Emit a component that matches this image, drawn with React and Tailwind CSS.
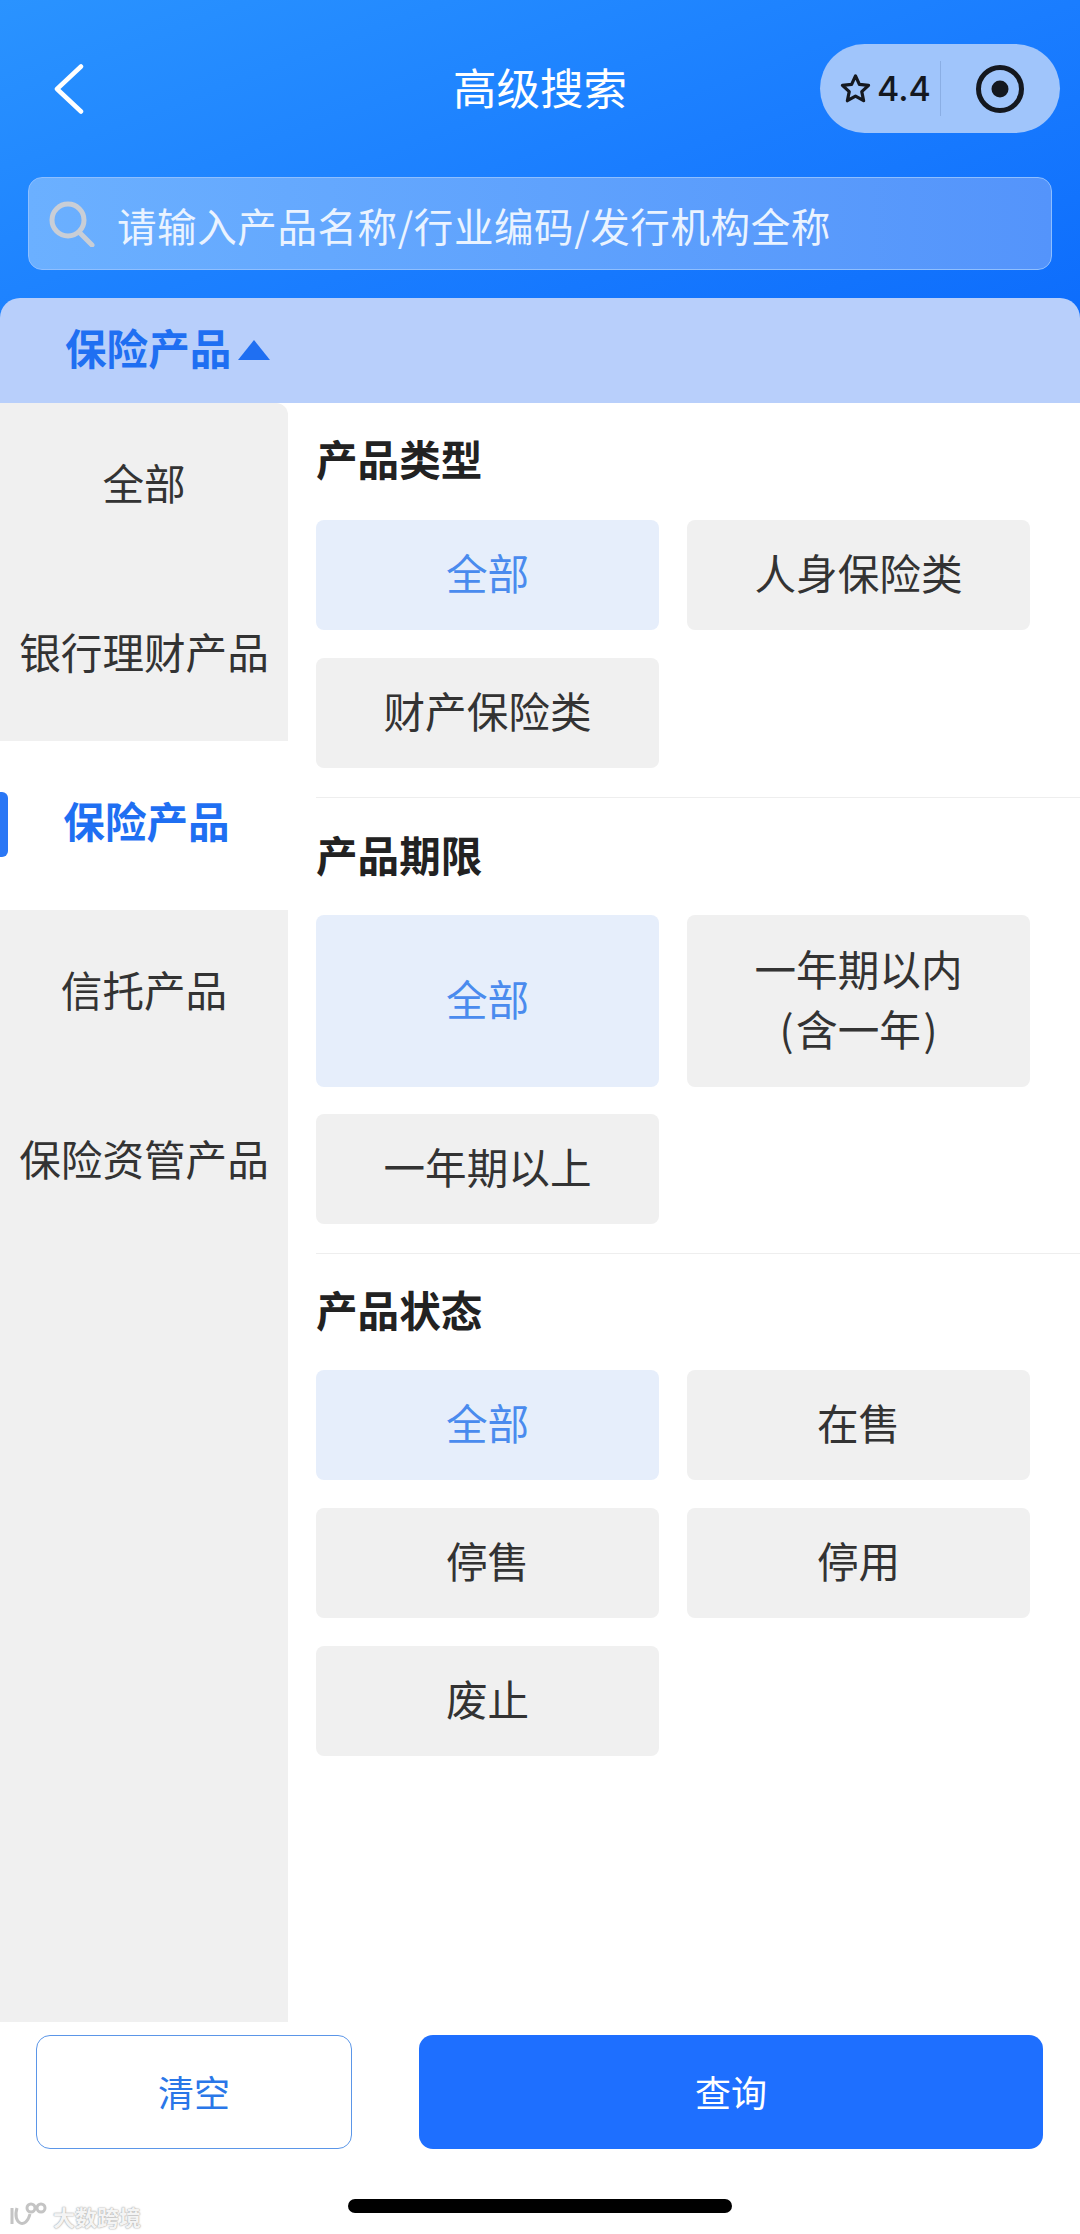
import React from "react";

const F = { fontFamily: '"Noto Sans CJK SC", "Noto Sans", sans-serif' };

function Opt({ label, active, tall }) {
  return (
    <div
      className={`flex items-center justify-center rounded-[8px] pb-[6px] text-center text-[41.6px] leading-[60px] whitespace-pre-line ${tall ? "h-[172px]" : "h-[110px]"} ${active ? "bg-[#e6eefb] text-[#4a8bee]" : "bg-[#f0f0f0] text-[#333333]"}`}
    >
      {label}
    </div>
  );
}

function Section({ title, children, top, border }) {
  return (
    <section className={`${border ? "border-b border-[#eeeeee]" : ""} ${top}`}>
      <h2 className="-mt-[2px] h-[60px] text-[41.6px] leading-[60px] font-semibold text-[#222222]">{title}</h2>
      {children}
    </section>
  );
}

export default function App() {
  const items = ["全部", "银行理财产品", "保险产品", "信托产品", "保险资管产品"];
  return (
    <div style={F} className="relative flex h-[2234px] w-[1080px] flex-col overflow-hidden bg-white">
      <header className="h-[403px] shrink-0 bg-gradient-to-br from-[#2a93ff] via-[#1a7dff] to-[#0a68fb] pt-[44px]">
        <div className="grid h-[89px] grid-cols-[1fr_auto_1fr] items-center">
          <div className="pl-[54px]">
            <svg width="30" height="50" viewBox="0 0 30 50" fill="none" stroke="#ffffff" strokeWidth="4.5" strokeLinecap="round" strokeLinejoin="round">
              <path d="M27 2.5 L3 25 L27 47.5" />
            </svg>
          </div>
          <h1 className="pb-[3px] text-[43.5px] leading-[60px] font-normal text-white">高级搜索</h1>
          <div className="flex justify-end pr-[20px]">
            <div className="flex h-[89px] w-[240px] items-center rounded-full bg-[#a0c5fb] pl-[19px]">
              <svg width="33" height="32" viewBox="0 0 24 24" fill="none" stroke="#14181f" strokeWidth="2.4" strokeLinejoin="round">
                <path d="M12 2.2 l2.9 6.3 6.9 .8 -5.1 4.7 1.4 6.8 -6.1 -3.5 -6.1 3.5 1.4 -6.8 -5.1 -4.7 6.9 -.8 z" />
              </svg>
              <span className="ml-[5px] text-[34px] leading-none font-medium text-[#14181f]" style={{ fontFamily: '"Inter", sans-serif' }}>4.4</span>
              <span className="ml-[9px] h-[55px] w-px bg-[#8aaee4]" />
              <svg className="ml-[35px]" width="48" height="48" viewBox="0 0 48 48">
                <circle cx="24" cy="24" r="21.5" fill="none" stroke="#14181f" strokeWidth="5" />
                <circle cx="24" cy="24" r="8.5" fill="#14181f" />
              </svg>
            </div>
          </div>
        </div>
        <div className="mx-[28px] mt-[44px] flex h-[93px] items-center rounded-[14px] border border-[#8fbfff] bg-gradient-to-r from-[#6bb0ff] to-[#5494fb] pl-[20px]">
          <svg width="46" height="46" viewBox="0 0 46 46" fill="none" stroke="#c9ced6" strokeWidth="5" strokeLinecap="round">
            <ellipse cx="19" cy="19" rx="16" ry="16" />
            <path d="M31 32 L43 44" />
          </svg>
          <span className="ml-[22px] pt-[3px] text-[39.5px] leading-none tracking-[0.6px] text-[#eaf3ff]">请输入产品名称/行业编码/发行机构全称</span>
        </div>
        <div className="mt-[28px] flex h-[105px] items-center rounded-t-[20px] bg-[#b8cffb] pl-[65px]">
          <span className="pb-[5px] text-[41.6px] leading-none font-semibold text-[#1f6ff2]">保险产品</span>
          <svg className="mb-[2px] ml-[7px]" width="32" height="20" viewBox="0 0 32 20">
            <path d="M16 0 L32 20 H0 z" fill="#1f6ff2" />
          </svg>
        </div>
      </header>

      <main className="flex h-[1619px] shrink-0">
        <nav className="relative w-[288px] shrink-0 overflow-hidden rounded-tr-[12px] bg-[#f0f0f0]">
          {items.map((t) => {
            const on = t === "保险产品";
            return (
              <div
                key={t}
                className={`flex h-[169px] items-center justify-center pb-[9px] text-[41.6px] leading-none ${on ? "bg-white pl-[5px] font-semibold text-[#1f6ff2]" : "text-[#333333]"}`}
              >
                {t}
              </div>
            );
          })}
          <span className="absolute left-0 top-[389px] h-[65px] w-[8px] rounded-r-[6px] bg-[#2a77f5]" />
        </nav>
        <div className="flex-1 pl-[28px]">
          <Section title="产品类型" top="pt-[27px]" border>
            <div className="mt-[32px] grid w-[714px] grid-cols-2 gap-x-[28px] gap-y-[28px] pb-[29px] pr-0">
              <Opt label="全部" active />
              <Opt label="人身保险类" />
              <Opt label="财产保险类" />
            </div>
          </Section>
          <Section title="产品期限" top="pt-[28px]" border>
            <div className="mt-[31px] grid w-[714px] grid-cols-2 gap-x-[28px] gap-y-[27px] pb-[29px]">
              <Opt label="全部" active tall />
              <Opt label={"一年期以内\n(\u200a含一年\u200a)"} tall />
              <Opt label="一年期以上" />
            </div>
          </Section>
          <Section title="产品状态" top="pt-[27px]">
            <div className="mt-[31px] grid w-[714px] grid-cols-2 gap-x-[28px] gap-y-[28px]">
              <Opt label="全部" active />
              <Opt label="在售" />
              <Opt label="停售" />
              <Opt label="停用" />
              <Opt label="废止" />
            </div>
          </Section>
        </div>
      </main>

      <footer className="flex flex-1 flex-col items-center">
        <div className="mt-[13px] flex h-[114px] w-full gap-[67px] pl-[36px] pr-[37px]">
          <button className="w-[316px] rounded-[14px] border border-[#5b96e8] bg-white pb-[3px] text-[36px] text-[#2a77e8]">清空</button>
          <button className="flex-1 rounded-[14px] bg-[#1e6fff] pb-[3px] text-[36px] text-white">查询</button>
        </div>
        <div className="mt-[50px] h-[14px] w-[384px] rounded-full bg-black" />
      </footer>

      <div className="absolute bottom-[4px] left-[10px] flex items-center" style={{ textShadow: "0 0 2px #a8a8a8, 0 0 1px #a8a8a8" }}>
        <svg width="40" height="28" viewBox="0 0 40 28" fill="none" stroke="#c4c4c4" strokeWidth="3">
          <path d="M2 6 V22 M7 6 C2 22 16 28 20 12" />
          <circle cx="21" cy="6" r="4" />
          <circle cx="31" cy="6" r="4" />
        </svg>
        <span className="ml-[3px] text-[22px] leading-none font-bold text-[#f4f4f4]">大数跨境</span>
      </div>
    </div>
  );
}
